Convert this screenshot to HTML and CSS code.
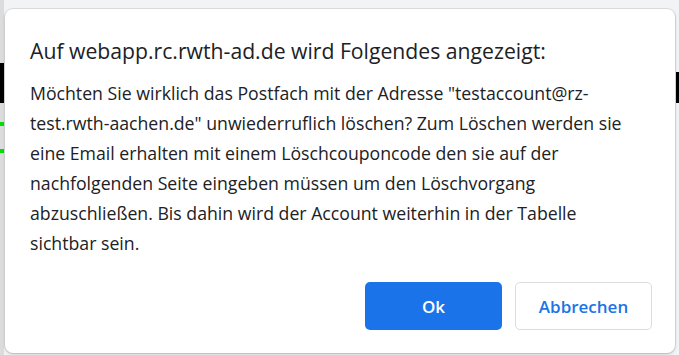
FILE: index.html
```html
<!DOCTYPE html>
<html lang="de">
<head>
<meta charset="utf-8">
<title>Dialog</title>
<link rel="stylesheet" href="styles.css">
</head>
<body>
<div class="backdrop">
  <span class="mark mark-black-left"></span>
  <span class="mark mark-green-1"></span>
  <span class="mark mark-green-2"></span>
  <span class="mark mark-black-right"></span>
  <div class="dialog">
    <h1 class="title">Auf webapp.rc.rwth-ad.de wird Folgendes angezeigt:</h1>
    <p class="msg">Möchten Sie wirklich das Postfach mit der Adresse "testaccount@rz-<br>test.rwth-aachen.de" unwiederruflich löschen? Zum Löschen werden sie<br>eine Email erhalten mit einem Löschcouponcode den sie auf der<br>nachfolgenden Seite eingeben müssen um den Löschvorgang<br>abzuschließen. Bis dahin wird der Account weiterhin in der Tabelle<br>sichtbar sein.</p>
    <div class="actions">
      <button class="btn btn-primary">Ok</button>
      <button class="btn btn-secondary">Abbrechen</button>
    </div>
  </div>
</div>
</body>
</html>
```
FILE: styles.css
```css
* { box-sizing: border-box; }
html, body { margin: 0; padding: 0; }
body {
  width: 679px;
  height: 355px;
  overflow: hidden;
  background: #f1f3f4;
  font-family: "Open Sans", "Noto Sans", sans-serif;
}
.backdrop {
  position: relative;
  width: 679px;
  height: 355px;
  padding: 9px 4px 2px 5px;
  background: linear-gradient(to right, #dcdcdc 0, #dcdcdc 4px, #f1f3f4 4px);
}
.mark { position: absolute; display: block; }
.mark-black-left { left: 0; top: 63px; width: 4px; height: 40px; background: #000; }
.mark-green-1 { left: 0; top: 122px; width: 4px; height: 4px; background: #00e000; }
.mark-green-2 { left: 0; top: 149px; width: 4px; height: 4px; background: #00e000; }
.mark-black-right { left: 676px; top: 72px; width: 3px; height: 31px; background: #000; }
.dialog {
  position: relative;
  width: 670px;
  height: 344px;
  background: #fff;
  border-radius: 8px;
  box-shadow: 0 0 0 1px rgba(0,0,0,0.08), 0 1px 3px rgba(0,0,0,0.2);
  padding: 28px 23px 23px 25px;
  display: flex;
  flex-direction: column;
}
.title {
  margin: 0;
  font-size: 21.2px;
  font-weight: 400;
  line-height: 28px;
  color: #202124;
  white-space: nowrap;
}
.msg {
  margin: 13px 0 0 0;
  font-size: 17.7px;
  line-height: 30px;
  color: #202124;
  white-space: nowrap;
}
.actions {
  margin-top: auto;
  display: flex;
  justify-content: flex-end;
  gap: 13px;
}
.btn {
  width: 137px;
  height: 48px;
  border-radius: 5px;
  font-family: inherit;
  font-size: 17px;
  font-weight: 600;
  cursor: pointer;
}
.btn-primary {
  background: #1a73e8;
  color: #fff;
  border: none;
}
.btn-secondary {
  background: #fff;
  color: #1a73e8;
  border: 1px solid #dadce0;
}
```
